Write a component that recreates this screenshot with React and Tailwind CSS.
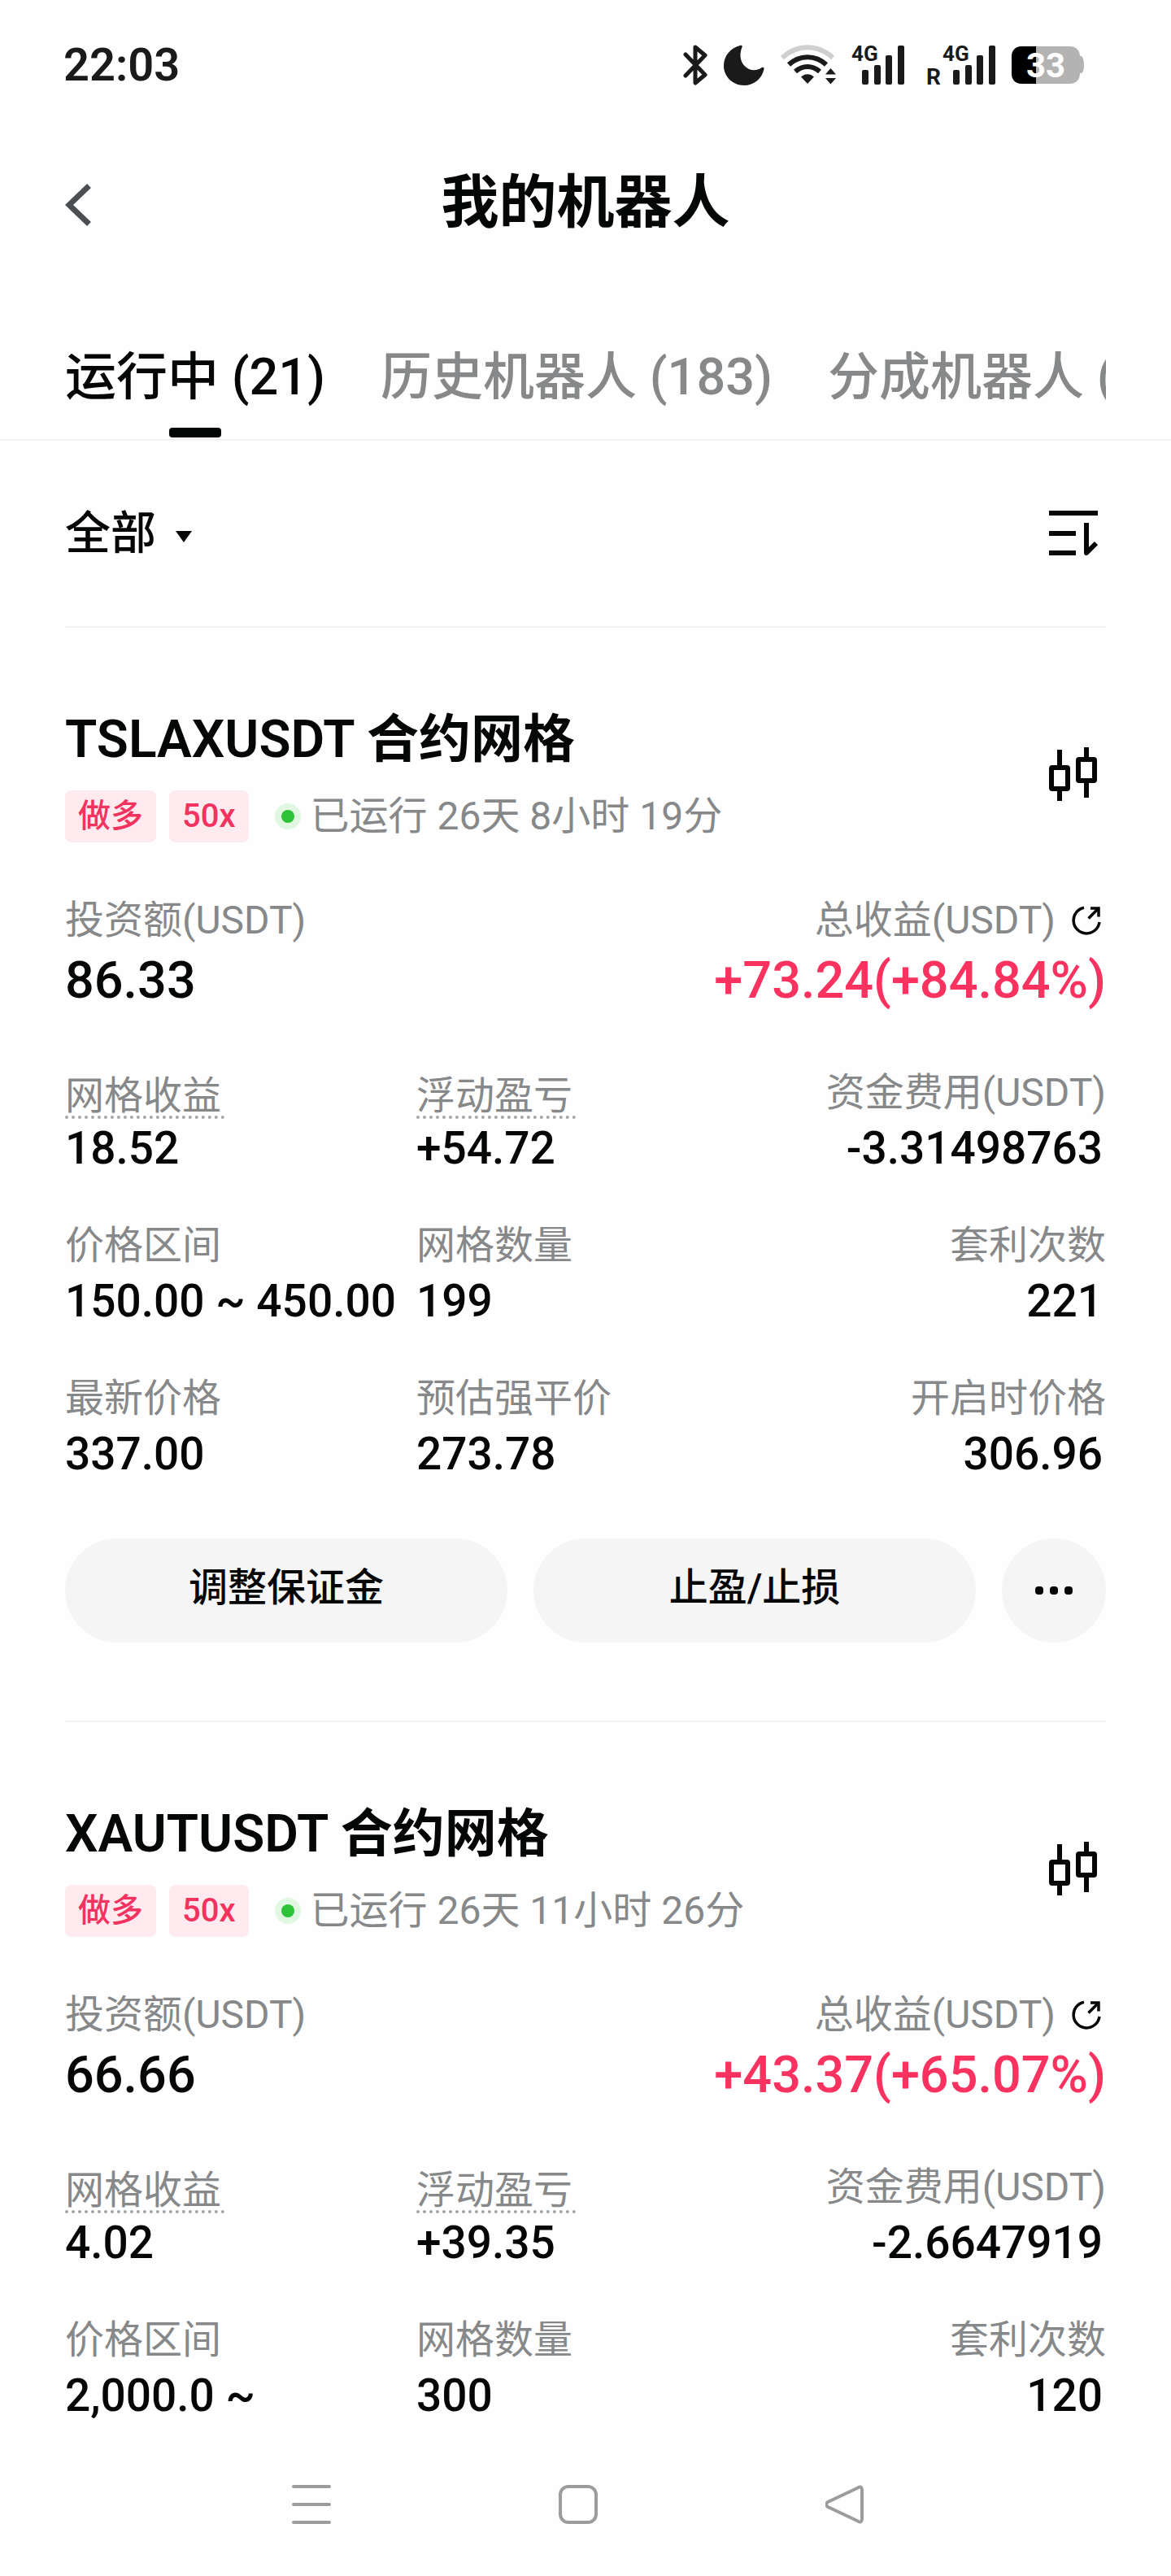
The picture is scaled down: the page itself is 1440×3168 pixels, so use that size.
import React, { useState } from 'react';

const tabs = [
  { id: 'running', name: '运行中 (21)' },
  { id: 'history', name: '历史机器人 (183)' },
  { id: 'shared', name: '分成机器人 (0)' },
];

const bots = [
  {
    id: 1,
    pair: 'TSLAXUSDT',
    runtime: '已运行 26天 8小时 19分',
    invested: '86.33',
    profit: '+73.24(+84.84%)',
    stats: [
      { label: '网格收益', value: '18.52', hint: true },
      { label: '浮动盈亏', value: '+54.72', hint: true },
      { label: '资金费用(USDT)', value: '-3.31498763' },
      { label: '价格区间', value: '150.00 ~ 450.00' },
      { label: '网格数量', value: '199' },
      { label: '套利次数', value: '221' },
      { label: '最新价格', value: '337.00' },
      { label: '预估强平价', value: '273.78' },
      { label: '开启时价格', value: '306.96' },
    ],
    actions: true,
  },
  {
    id: 2,
    pair: 'XAUTUSDT',
    runtime: '已运行 26天 11小时 26分',
    invested: '66.66',
    profit: '+43.37(+65.07%)',
    stats: [
      { label: '网格收益', value: '4.02', hint: true },
      { label: '浮动盈亏', value: '+39.35', hint: true },
      { label: '资金费用(USDT)', value: '-2.6647919' },
      { label: '价格区间', value: '2,000.0 ~' },
      { label: '网格数量', value: '300' },
      { label: '套利次数', value: '120' },
    ],
    actions: false,
  },
];

const BluetoothIcon = () => (
  <svg width="30" height="50" viewBox="0 0 30 50" fill="none" stroke="#1a1a1a" strokeWidth="5" strokeLinecap="round" strokeLinejoin="round">
    <path d="M3 12 L27 37 L15 47 V3 L27 13 L3 38" />
  </svg>
);

const MoonIcon = () => (
  <svg width="50" height="50" viewBox="0 0 50 50" fill="#1a1a1a">
    <path d="M20 1 C22 0 23.5 1.5 22.5 3 C18 14 21 25 31 30 C36 32 42 31.5 46 28.5 C48 27 50 28 49.5 30 C47 42 37 50 25 50 C11 50 0 39 0 26 C0 14 8 4 20 1 Z" />
  </svg>
);

const WifiIcon = () => (
  <svg width="68" height="50" viewBox="0 0 68 50" fill="none" strokeWidth="6" strokeLinecap="butt">
    <path d="M2 16 C20 -1 46 -1 64 16" stroke="#cfcfcf" />
    <path d="M10 24.5 C23 12 43 12 56 24.5" stroke="#1a1a1a" />
    <path d="M18 33 C27 25 39 25 48 33" stroke="#1a1a1a" />
    <path d="M25 39.5 C30 35 36 35 41 39.5 L33 48 Z" fill="#1a1a1a" />
    <path d="M55 36.5 L61.5 29 L68 36.5 Z M55 41 L61.5 48.5 L68 41 Z" fill="#1a1a1a" />
  </svg>
);

const SignalIcon = ({ roaming }) => (
  <svg
    width={roaming ? 84 : 64}
    height="50"
    viewBox={roaming ? '-20 0 84 50' : '0 0 64 50'}
    fill="#1a1a1a"
    className={roaming ? 'overflow-visible font-bold' : 'mr-2 overflow-visible font-bold'}
  >
    {roaming && (
      <text x="-21" y="49" fontSize="28">R</text>
    )}
    <text x="-1" y="20" fontSize="26">4G</text>
    <rect x="12" y="31" width="8" height="18" rx="2" />
    <rect x="27" y="25" width="8" height="24" rx="2" />
    <rect x="41" y="13" width="8" height="36" rx="2" />
    <rect x="56" y="1" width="8" height="48" rx="2" />
  </svg>
);

const BatteryIcon = () => (
  <svg width="90" height="46" viewBox="0 0 90 46" className="overflow-visible">
    <path d="M12 0 H72 C79 0 84 5 84 12 H86 Q89 15 89 23 Q89 31 86 33 H84 C84 41 79 46 72 46 H12 C5 46 0 41 0 34 V12 C0 5 5 0 12 0 Z" fill="#b3b3b3" />
    <path d="M30 0 H12 C5 0 0 5 0 12 V34 C0 41 5 46 12 46 H30 Z" fill="#000" />
    <text x="42" y="38" fontSize="42" fill="#fff" textAnchor="middle" className="font-bold">33</text>
  </svg>
);

const StatusBar = () => (
  <div className="flex h-40 items-center justify-between pr-[106px] pl-[78px]">
    <time className="text-[56px] leading-none font-semibold text-[#1a1a1a]">22:03</time>
    <div className="flex items-center gap-5">
      <BluetoothIcon />
      <MoonIcon />
      <WifiIcon />
      <SignalIcon />
      <SignalIcon roaming />
      <BatteryIcon />
    </div>
  </div>
);

const CandlesIcon = () => (
  <svg width="60" height="66" viewBox="0 0 60 66" fill="none" stroke="#050606" strokeWidth="6">
    <rect x="3" y="25" width="20" height="26" rx="1" />
    <path d="M13 3 V25 M13 51 V66" />
    <rect x="36" y="15" width="20" height="26" rx="1" />
    <path d="M46 0 V15 M46 41 V62" />
  </svg>
);

const ShareIcon = () => (
  <svg width="36" height="36" viewBox="0 0 36 36" fill="none" stroke="#050606" strokeWidth="3.5">
    <path d="M15 2.2 A16 16 0 1 0 34 20" />
    <path d="M20.5 15.5 L33 3" />
    <path d="M23 3 H33 V13.5" />
  </svg>
);

const Stat = ({ label, value, hint, last }) => (
  <div className={last ? 'text-right' : ''}>
    <dt className="flex h-16 flex-col justify-center text-5xl leading-[56px] text-[#868889]">
      {hint ? (
        <span className="mt-3 self-start border-b-4 border-dotted border-[#a5a7a8] pr-1 leading-[48px]">{label}</span>
      ) : (
        label
      )}
    </dt>
    <dd className={`text-[55px] leading-[72px] font-medium whitespace-nowrap text-[#050606] ${last ? 'pr-1' : ''}`}>
      {value}
    </dd>
  </div>
);

const BotCard = ({ bot }) => (
  <article className="mx-20 border-t-2 border-[#f4f4f4] pt-24">
    <div className="flex items-center justify-between">
      <div>
        <h2 className="text-[64px] leading-[84px] font-semibold text-[#050606]">{bot.pair} 合约网格</h2>
        <div className="mt-5 flex items-center">
          <span className="mr-4 rounded-lg bg-[#ffebef] px-4 text-[40px] leading-[64px] font-medium text-[#f2335f]">做多</span>
          <span className="rounded-lg bg-[#ffebef] px-4 text-[40px] leading-[64px] font-medium text-[#f2335f]">50x</span>
          <span className="mr-3 ml-8 flex size-8 items-center justify-center rounded-full bg-[#e0f7e2]">
            <span className="size-4 rounded-full bg-[#2dc238]" />
          </span>
          <span className="text-5xl leading-[64px] text-[#868889]">{bot.runtime}</span>
        </div>
      </div>
      <button type="button" aria-label="K线" className="mr-2.5">
        <CandlesIcon />
      </button>
    </div>

    <dl className="mt-16 flex justify-between">
      <div>
        <dt className="text-5xl leading-[64px] text-[#868889]">投资额(USDT)</dt>
        <dd className="text-[63px] leading-[84px] font-medium text-[#050606]">{bot.invested}</dd>
      </div>
      <div>
        <dt className="flex items-center justify-end text-5xl leading-[64px] text-[#868889]">
          总收益(USDT)
          <button type="button" aria-label="分享收益" className="mr-1.5 ml-5">
            <ShareIcon />
          </button>
        </dt>
        <dd className="text-right text-[63px] leading-[84px] font-medium text-[#fa325f]">{bot.profit}</dd>
      </div>
    </dl>

    <dl className="mt-16 grid grid-cols-3 gap-x-4 gap-y-[52px]">
      {bot.stats.map((stat, index) => (
        <Stat key={stat.label} {...stat} last={index % 3 === 2} />
      ))}
    </dl>

    {bot.actions && (
      <div className="mt-[68px] mb-24 flex gap-8">
        <button type="button" className="h-32 flex-1 rounded-full bg-[#f5f5f5] pb-1.5 text-5xl font-medium text-[#050606]">
          调整保证金
        </button>
        <button type="button" className="h-32 flex-1 rounded-full bg-[#f5f5f5] pb-1.5 text-5xl font-medium text-[#050606]">
          止盈/止损
        </button>
        <button type="button" aria-label="更多" className="flex size-32 items-center justify-center gap-2 rounded-full bg-[#f5f5f5]">
          <span className="size-2.5 rounded-[4px] bg-[#050606]" />
          <span className="size-2.5 rounded-[4px] bg-[#050606]" />
          <span className="size-2.5 rounded-[4px] bg-[#050606]" />
        </button>
      </div>
    )}
  </article>
);

const NavBar = () => (
  <nav className="mt-auto flex h-44 items-center justify-center gap-[280px] pr-[18px]">
    <button type="button" aria-label="最近任务">
      <svg width="48" height="48" viewBox="0 0 48 48" stroke="#9c9c9c" strokeWidth="4" strokeLinecap="round">
        <path d="M2 2 H46 M2 24 H46 M2 46 H46" />
      </svg>
    </button>
    <button type="button" aria-label="主屏幕">
      <svg width="48" height="48" viewBox="0 0 48 48" fill="none" stroke="#9c9c9c" strokeWidth="4">
        <rect x="2" y="2" width="44" height="44" rx="10" />
      </svg>
    </button>
    <button type="button" aria-label="返回">
      <svg width="48" height="48" viewBox="0 0 48 48" fill="none" stroke="#9c9c9c" strokeWidth="4" strokeLinejoin="round">
        <path d="M39 4 Q44 0 45 6 V42 Q44 48 39 44 L3 27 Q-1 24 3 21 Z" />
      </svg>
    </button>
  </nav>
);

const App = () => {
  const [activeTab, setActiveTab] = useState('running');
  const [filter, setFilter] = useState('all');

  return (
    <div className="flex min-h-screen flex-col bg-[#fefefe] font-['Roboto','Noto_Sans_CJK_SC',sans-serif]">
      <StatusBar />

      {/* Header */}
      <header className="grid h-44 grid-cols-[1fr_auto_1fr] items-center px-20">
        <button type="button" aria-label="返回" className="mt-2 justify-self-start">
          <svg width="32" height="52" viewBox="0 0 32 52" fill="none" stroke="#4b4e52" strokeWidth="7">
            <path d="M29.5 2.5 L5 26 L29.5 49.5" />
          </svg>
        </button>
        <h1 className="text-[71px] leading-none font-bold text-[#050606]">我的机器人</h1>
      </header>

      {/* Tabs */}
      <div className="border-b-2 border-[#f4f4f4] px-20 pt-20">
        <div role="tablist" className="flex gap-[68px] overflow-hidden">
          {tabs.map((tab) => (
            <button
              key={tab.id}
              type="button"
              role="tab"
              aria-selected={activeTab === tab.id}
              onClick={() => setActiveTab(tab.id)}
              className={`flex shrink-0 flex-col items-center text-[63px] leading-[96px] font-medium whitespace-nowrap ${
                activeTab === tab.id ? 'text-[#050606]' : 'text-[#868889]'
              }`}
            >
              {tab.name}
              <span className={`mt-3.5 mb-0.5 h-3 w-16 rounded-sm ${activeTab === tab.id ? 'bg-[#050606]' : ''}`} />
            </button>
          ))}
        </div>
      </div>

      {/* Filter */}
      <div className="flex h-[228px] items-center justify-between pr-[90px] pl-20">
        <div className="flex items-center gap-6">
          <select
            aria-label="筛选"
            value={filter}
            onChange={(e) => setFilter(e.target.value)}
            className="field-sizing-content appearance-none bg-transparent text-[56px] leading-[80px] font-medium text-[#050606]"
          >
            <option value="all">全部</option>
          </select>
          <svg width="20" height="14" viewBox="0 0 20 14" className="pointer-events-none mt-2">
            <path d="M0 0 H20 L10 14 Z" fill="#050606" />
          </svg>
        </div>
        <button type="button" aria-label="排序">
          <svg width="60" height="56" viewBox="0 0 60 56" fill="none" stroke="#050606" strokeWidth="6">
            <path d="M0 3 H60 M0 28 H33 M0 52 H33" />
            <path d="M46 15 V52 L58 40" strokeLinejoin="round" />
          </svg>
        </button>
      </div>

      {/* Bots */}
      <main>
        {bots.map((bot) => (
          <BotCard key={bot.id} bot={bot} />
        ))}
      </main>

      <NavBar />
    </div>
  );
};

export default App;
